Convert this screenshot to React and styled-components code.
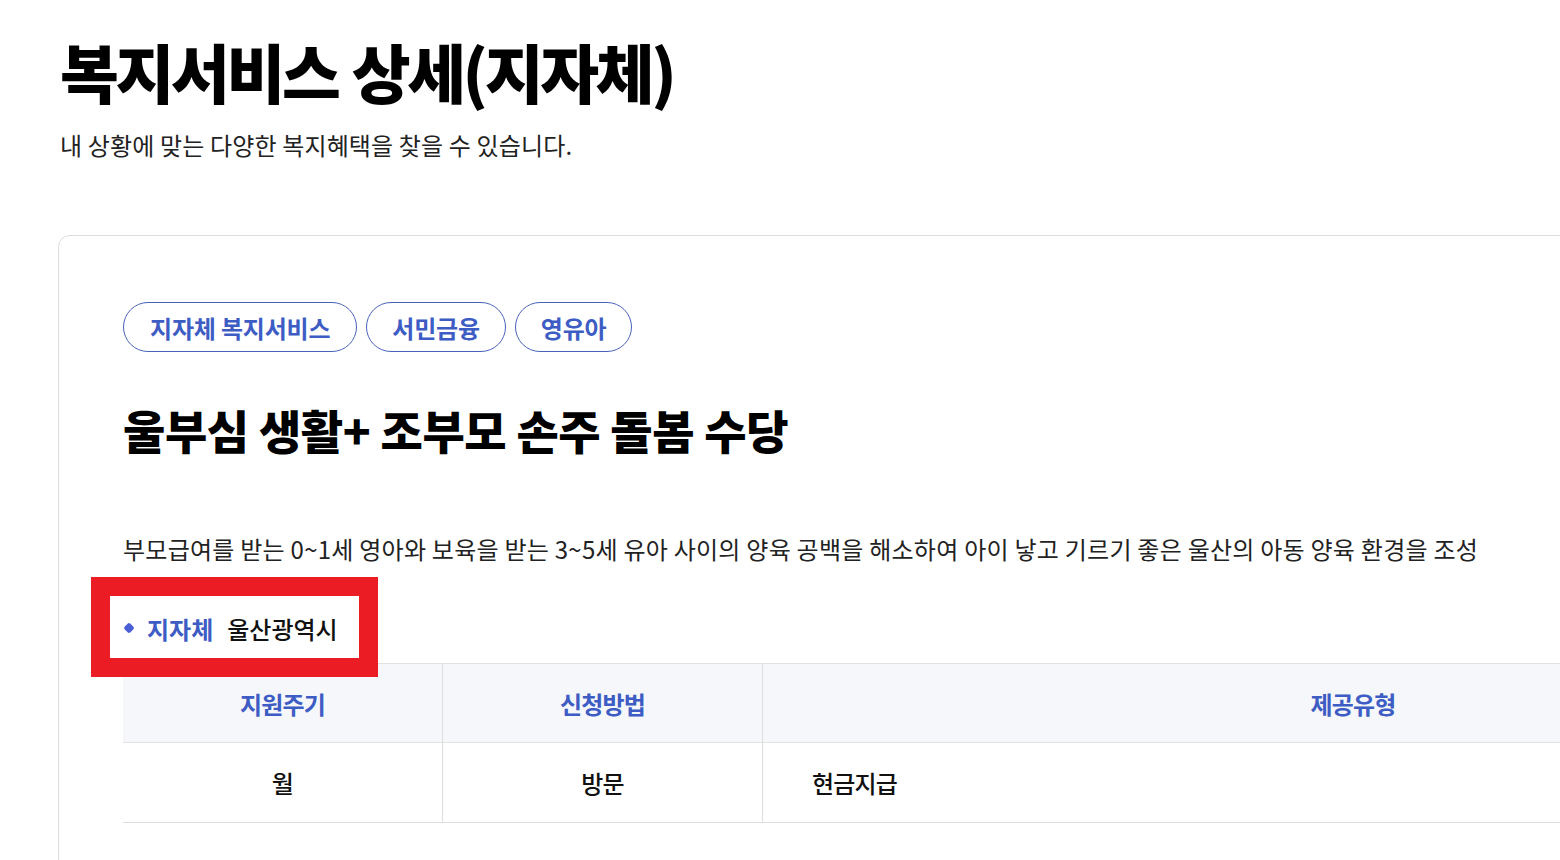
import React from "react";
import styled, { createGlobalStyle } from "styled-components";

const Global = createGlobalStyle`
  html, body { margin: 0; padding: 0; background: #fff; overflow: hidden; }
  body { font-family: "Noto Sans CJK KR", "Noto Sans", sans-serif; color: #111; }
  * { box-sizing: border-box; }
`;

const Page = styled.div`
  width: 1560px;
  height: 860px;
  overflow: hidden;
  padding: 30px 0 0 58px;
`;

const Title = styled.h1`
  margin: 0 0 0 2px;
  font-size: 64px;
  line-height: 80px;
  font-weight: 800;
  letter-spacing: -3.4px;
  word-spacing: 3px;
  color: #000;
`;

const Subtitle = styled.p`
  margin: 18px 0 0 2px;
  font-size: 24px;
  line-height: 34px;
  font-weight: 400;
  letter-spacing: 0.15px;
  color: #222;
`;

const Card = styled.section`
  margin-top: 73px;
  width: 1950px;
  border: 1px solid #dedede;
  border-radius: 12px;
  padding: 66px 64px 80px 64px;
  position: relative;
`;

const TagRow = styled.div`
  display: flex;
  gap: 9px;
`;

const Tag = styled.span`
  display: inline-flex;
  align-items: center;
  height: 50px;
  padding: 0 ${(p) => p.$pad}px;
  border: 1px solid #4763b8;
  border-radius: 25px;
  font-size: 24px;
  font-weight: 700;
  letter-spacing: -0.2px;
  color: #3d5cc4;
`;

const Heading = styled.h2`
  margin: 42px 0 0 0;
  font-size: 46px;
  line-height: 70px;
  font-weight: 800;
  letter-spacing: -0.4px;
  color: #000;
`;

const Desc = styled.p`
  margin: 69px 0 0 0;
  font-size: 24px;
  line-height: 32px;
  letter-spacing: 0.25px;
  color: #222;
`;

const InfoWrap = styled.div`
  position: relative;
  margin-top: 39px;
  height: 48px;
  display: flex;
  align-items: center;
`;

const Highlight = styled.div`
  position: absolute;
  left: -32px;
  top: -27px;
  width: 287px;
  height: 100px;
  border: 19px solid #ec1c24;
  pointer-events: none;
`;

const InfoItem = styled.div`
  display: flex;
  align-items: center;
  gap: 14px;
  font-size: 24px;
  letter-spacing: 0;
  padding-left: 2px;
`;

const Bullet = styled.span`
  width: 8px;
  height: 8px;
  background: #4a5fd6;
  transform: rotate(45deg);
  border-radius: 2px;
`;

const InfoLabel = styled.span`
  font-weight: 700;
  color: #3d5cc4;
`;

const InfoValue = styled.span`
  font-weight: 500;
  color: #111;
`;

const Table = styled.div`
  margin-top: 11px;
  display: grid;
  grid-template-columns: 319px 320px 1fr;
  border-top: 1px solid #e2e2e2;
  border-bottom: 1px solid #dcdcdc;
`;

const HeadCell = styled.div`
  height: 79px;
  display: flex;
  align-items: center;
  justify-content: center;
  background: #f5f7fa;
  border-bottom: 1px solid #e2e2e2;
  border-left: ${(p) => (p.$first ? "none" : "1px solid #dedede")};
  font-size: 24px;
  font-weight: 700;
  letter-spacing: -0.8px;
  color: #3d5cc4;
`;

const Cell = styled.div`
  height: 79px;
  display: flex;
  align-items: center;
  justify-content: ${(p) => (p.$left ? "flex-start" : "center")};
  padding-left: ${(p) => (p.$left ? "49px" : "0")};
  border-left: ${(p) => (p.$first ? "none" : "1px solid #dedede")};
  font-size: 24px;
  font-weight: 500;
  letter-spacing: -0.8px;
  color: #111;
`;

export default function App() {
  return (
    <>
      <Global />
      <Page>
        <Title>복지서비스 상세(지자체)</Title>
        <Subtitle>내 상황에 맞는 다양한 복지혜택을 찾을 수 있습니다.</Subtitle>
        <Card>
          <TagRow>
            <Tag $pad={26}>지자체 복지서비스</Tag>
            <Tag $pad={25}>서민금융</Tag>
            <Tag $pad={25}>영유아</Tag>
          </TagRow>
          <Heading>울부심 생활+ 조부모 손주 돌봄 수당</Heading>
          <Desc>
            부모급여를 받는 0~1세 영아와 보육을 받는 3~5세 유아 사이의 양육 공백을 해소하여 아이 낳고 기르기 좋은 울산의 아동 양육 환경을 조성
          </Desc>
          <InfoWrap>
            <InfoItem>
              <Bullet />
              <InfoLabel>지자체</InfoLabel>
              <InfoValue>울산광역시</InfoValue>
            </InfoItem>
            <Highlight />
          </InfoWrap>
          <Table>
            <HeadCell $first>지원주기</HeadCell>
            <HeadCell>신청방법</HeadCell>
            <HeadCell>제공유형</HeadCell>
            <Cell $first>월</Cell>
            <Cell>방문</Cell>
            <Cell $left>현금지급</Cell>
          </Table>
        </Card>
      </Page>
    </>
  );
}
